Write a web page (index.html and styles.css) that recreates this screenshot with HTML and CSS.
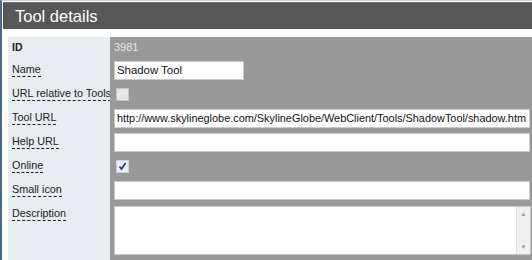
FILE: index.html
```html
<html>
<head>
  <meta charset="UTF-8">
  <title>Tool details</title>
  <link rel="stylesheet" href="styles.css">
</head>
<body>
  <div class="page">
    <div class="panel-title">Tool details</div>
    <div class="form">
      <div class="label row-id"><b>ID</b></div>
      <div class="value row-id"><span class="readonly">3981</span></div>

      <div class="label"><span class="hint">Name</span></div>
      <div class="value"><input class="field short" type="text" value="Shadow Tool"></div>

      <div class="label"><span class="hint">URL relative to Tools</span></div>
      <div class="value"><span class="check"></span></div>

      <div class="label"><span class="hint">Tool URL</span></div>
      <div class="value"><input class="field" type="text" value="http://www.skylineglobe.com/SkylineGlobe/WebClient/Tools/ShadowTool/shadow.htm"></div>

      <div class="label"><span class="hint">Help URL</span></div>
      <div class="value"><input class="field" type="text" value=""></div>

      <div class="label"><span class="hint">Online</span></div>
      <div class="value"><span class="check checked">
        <svg width="9" height="9" viewBox="0 0 9 9"><path d="M1.5 4.5 L3.5 7 L7.5 1" fill="none" stroke="#2b3a8c" stroke-width="1.8"/></svg>
      </span></div>

      <div class="label"><span class="hint">Small icon</span></div>
      <div class="value"><input class="field" type="text" value=""></div>

      <div class="label row-desc"><span class="hint">Description</span></div>
      <div class="value row-desc">
        <div class="textarea">
          <div class="scrollbar"><span>&#9650;</span><span>&#9660;</span></div>
        </div>
      </div>
    </div>
  </div>
</body>
</html>
```
FILE: styles.css
```css
body {
  margin: 0;
  background: #fff;
  font-family: "Liberation Sans", Arial, sans-serif;
  overflow: hidden;
}
.page {
  height: 260px;
  border-left: 2px solid #4d6985;
  border-top: 1px solid #c9d2dc;
}
.panel-title {
  margin: 1px 0 0 1px;
  height: 26px;
  background: #575757;
  border-top: 1px solid #6e6e6e;
  color: #fff;
  font-size: 16.5px;
  line-height: 27px;
  padding-left: 12px;
}
.form {
  margin: 8px 0 0 6px;
  display: grid;
  grid-template-columns: 102px 1fr;
  grid-template-rows: 21px repeat(6, 24px) 60px;
}
.label {
  background: #e8ebef;
  font-size: 10.8px;
  color: #222;
  padding: 5px 0 0 4px;
  white-space: nowrap;
}
.label b { font-size: 10.5px; }
.row-id.label { padding-top: 4px; }
.hint {
  border-bottom: 1px dashed #222;
  padding-bottom: 1px;
}
.value {
  background: #999;
  display: flex;
  align-items: center;
  padding-left: 4px;
}
.row-id.value { align-items: flex-start; padding-top: 4px; }
.row-desc.value { align-items: flex-start; padding-top: 4px; }
.readonly {
  color: #e6e6e6;
  font-size: 11px;
}
.field {
  width: 100%;
  height: 19px;
  margin: 0 2px 0 0;
  border: 1px solid #c8c8c8;
  background: #fff;
  font-family: "Liberation Sans", Arial, sans-serif;
  font-size: 10.9px;
  padding: 0 2px;
  box-sizing: border-box;
  color: #111;
}
.field.short { width: 130px; font-size: 11.4px; }
.check {
  width: 11px;
  height: 11px;
  border: 1px solid #c4c4c4;
  background: #e6e6e6;
  margin-left: 2px;
  display: flex;
  align-items: center;
  justify-content: center;
}
.check.checked { background: #eef0f8; border-color: #d0d0d0; }
.textarea {
  width: 100%;
  height: 49px;
  margin-right: 1px;
  background: #fff;
  border: 1px solid #c8c8c8;
  box-sizing: border-box;
  display: flex;
  justify-content: flex-end;
}
.scrollbar {
  width: 13px;
  background: #f0f0f0;
  border-left: 1px solid #e2e2e2;
  display: flex;
  flex-direction: column;
  justify-content: space-between;
  align-items: center;
  font-size: 6px;
  color: #999;
  padding: 4px 0;
}
```
